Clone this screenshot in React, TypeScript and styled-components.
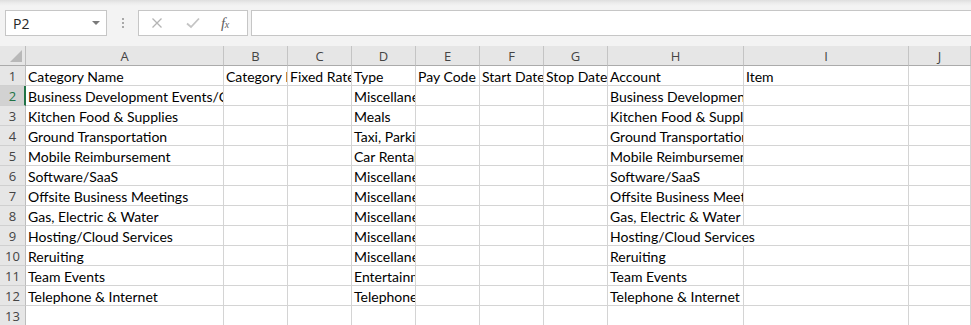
import { Fragment } from 'react';
import styled, { createGlobalStyle } from 'styled-components';

const columns = [
  { key: 'A', width: 198 },
  { key: 'B', width: 64 },
  { key: 'C', width: 64 },
  { key: 'D', width: 64 },
  { key: 'E', width: 64 },
  { key: 'F', width: 64 },
  { key: 'G', width: 64 },
  { key: 'H', width: 136 },
  { key: 'I', width: 165 },
  { key: 'J', width: 0 }
];

type Row = { cells: Record<string, string>; spill?: string };

// cells by column letter; `spill` marks the one cell whose text runs into its empty neighbour
const rows: Row[] = [
  { cells: { A: 'Category Name', B: 'Category ID', C: 'Fixed Rate', D: 'Type', E: 'Pay Code', F: 'Start Date', G: 'Stop Date', H: 'Account', I: 'Item' } },
  { cells: { A: 'Business Development Events/Conferences', D: 'Miscellaneous', H: 'Business Development Events/Conferences' } },
  { cells: { A: 'Kitchen Food & Supplies', D: 'Meals', H: 'Kitchen Food & Supplies' } },
  { cells: { A: 'Ground Transportation', D: 'Taxi, Parking & Tolls', H: 'Ground Transportation' } },
  { cells: { A: 'Mobile Reimbursement', D: 'Car Rental', H: 'Mobile Reimbursement' } },
  { cells: { A: 'Software/SaaS', D: 'Miscellaneous', H: 'Software/SaaS' } },
  { cells: { A: 'Offsite Business Meetings', D: 'Miscellaneous', H: 'Offsite Business Meetings' } },
  { cells: { A: 'Gas, Electric & Water', D: 'Miscellaneous', H: 'Gas, Electric & Water' } },
  { cells: { A: 'Hosting/Cloud Services', D: 'Miscellaneous', H: 'Hosting/Cloud Services' }, spill: 'H' },
  { cells: { A: 'Reruiting', D: 'Miscellaneous', H: 'Reruiting' } },
  { cells: { A: 'Team Events', D: 'Entertainment', H: 'Team Events' } },
  { cells: { A: 'Telephone & Internet', D: 'Telephone', H: 'Telephone & Internet' } },
  { cells: {} }
];

const selectedRow = 2;

export default function App() {
  return (
    <>
      <GlobalStyle />
      <Window>
        <FormulaBar>
          <NameBox>
            <span>P2</span>
            <DropArrow />
          </NameBox>
          <Grip>
            <i />
            <i />
            <i />
          </Grip>
          <ActionBox>
            <ActionIcon viewBox="0 0 12 12" width={12} height={12}>
              <path d="M1.5 1.5 L10.5 10.5 M10.5 1.5 L1.5 10.5" stroke="#b4b4b4" strokeWidth="1.3" fill="none" />
            </ActionIcon>
            <ActionIcon viewBox="0 0 14 12" width={14} height={12}>
              <path d="M1 6.5 L5 10 L13 1.5" stroke="#c4c4c4" strokeWidth="1.8" fill="none" />
            </ActionIcon>
            <FxLabel>
              f<sub>x</sub>
            </FxLabel>
          </ActionBox>
          <FormulaInput />
        </FormulaBar>

        <SheetGrid>
          <CornerCell>
            <CornerTriangle />
          </CornerCell>
          {columns.map((c) => (
            <ColHeader key={c.key}>{c.key}</ColHeader>
          ))}
          {rows.map((row, r) => (
            <Fragment key={r}>
              <RowHeader $active={r + 1 === selectedRow}>{r + 1}</RowHeader>
              {columns.map((c) => (
                <Cell key={c.key} $spill={row.spill === c.key}>
                  {row.cells[c.key]}
                </Cell>
              ))}
            </Fragment>
          ))}
        </SheetGrid>
      </Window>
    </>
  );
}

const GlobalStyle = createGlobalStyle`
  html, body {
    margin: 0;
    padding: 0;
    background: #ffffff;
    overflow: hidden;
  }
  body {
    font-family: 'Open Sans', 'Noto Sans', sans-serif;
  }
`;

const Window = styled.div`
  width: 971px;
  height: 325px;
  overflow: hidden;
  background: #ffffff;
`;

const FormulaBar = styled.div`
  display: flex;
  align-items: stretch;
  height: 46px;
  box-sizing: border-box;
  padding: 10px 0 10px 5px;
  background: linear-gradient(#dedede 0px, #ececec 3px, #f3f3f3 6px, #f3f3f3 100%);
`;

const NameBox = styled.div`
  width: 102px;
  height: 26px;
  box-sizing: border-box;
  border: 1px solid #c6c6c6;
  background: #ffffff;
  display: flex;
  align-items: center;
  justify-content: space-between;
  padding: 0 6px 0 7px;
  font-size: 14px;
  color: #262626;
  font-family: 'Open Sans', sans-serif;
`;

const DropArrow = styled.span`
  width: 0;
  height: 0;
  border-left: 4px solid transparent;
  border-right: 4px solid transparent;
  border-top: 4px solid #7a7a7a;
  margin-top: -1px;
`;

const Grip = styled.div`
  width: 31px;
  display: flex;
  flex-direction: column;
  align-items: center;
  justify-content: center;
  gap: 2px;
  i {
    width: 2px;
    height: 2px;
    background: #a8a8a8;
  }
`;

const ActionBox = styled.div`
  width: 110px;
  height: 26px;
  box-sizing: border-box;
  border: 1px solid #c6c6c6;
  background: #ffffff;
  display: flex;
  align-items: center;
  padding: 0 0 0 12px;
`;

const ActionIcon = styled.svg`
  flex: none;
  margin-right: 23px;
`;

const FxLabel = styled.span`
  font-family: 'Liberation Serif', serif;
  font-style: italic;
  font-size: 15px;
  color: #5e5e5e;
  margin-left: -2px;
  letter-spacing: -0.5px;
  sub {
    font-size: 10px;
    vertical-align: 0;
  }
`;

const FormulaInput = styled.div`
  flex: 1;
  margin-left: 3px;
  margin-right: -2px;
  height: 26px;
  box-sizing: border-box;
  border: 1px solid #c6c6c6;
  background: #ffffff;
`;

const SheetGrid = styled.div`
  display: grid;
  grid-template-columns: 26px ${columns.slice(0, -1).map((c) => `${c.width}px`).join(' ')} minmax(0, 1fr);
  grid-auto-rows: 20px;
  background: #ffffff;
`;

const HeaderBase = styled.div`
  box-sizing: border-box;
  background: #e6e6e6;
  display: flex;
  align-items: center;
  justify-content: center;
  font-family: 'Open Sans', sans-serif;
  font-size: 13px;
  color: #444444;
`;

const CornerCell = styled(HeaderBase)`
  border-right: 1px solid #bdbdbd;
  border-bottom: 1px solid #ababab;
  position: relative;
`;

const CornerTriangle = styled.span`
  position: absolute;
  right: 3px;
  bottom: 3px;
  width: 0;
  height: 0;
  border-left: 12px solid transparent;
  border-bottom: 12px solid #b8b8b8;
`;

const ColHeader = styled(HeaderBase)`
  border-right: 1px solid #c4c4c4;
  border-bottom: 1px solid #ababab;
`;

const RowHeader = styled(HeaderBase)<{ $active?: boolean }>`
  border-bottom: 1px solid #d0d0d0;
  border-right: ${(p) => (p.$active ? '2px solid #217346' : '1px solid #bdbdbd')};
  padding-left: ${(p) => (p.$active ? '1px' : '0')};
  background: ${(p) => (p.$active ? '#d2d2d2' : '#e6e6e6')};
  color: ${(p) => (p.$active ? '#217346' : '#444444')};
  padding-top: 1px;
`;

const Cell = styled.div<{ $spill?: boolean }>`
  box-sizing: border-box;
  border-right: 1px solid ${(p) => (p.$spill ? 'transparent' : '#d4d4d4')};
  border-bottom: 1px solid #d4d4d4;
  padding: 1px 0 0 2px;
  font-family: 'Lato', 'Liberation Sans', sans-serif;
  font-size: 14px;
  line-height: 19px;
  color: #000000;
  white-space: pre;
  overflow: ${(p) => (p.$spill ? 'visible' : 'hidden')};
  position: relative;
  z-index: ${(p) => (p.$spill ? 1 : 0)};
`;
